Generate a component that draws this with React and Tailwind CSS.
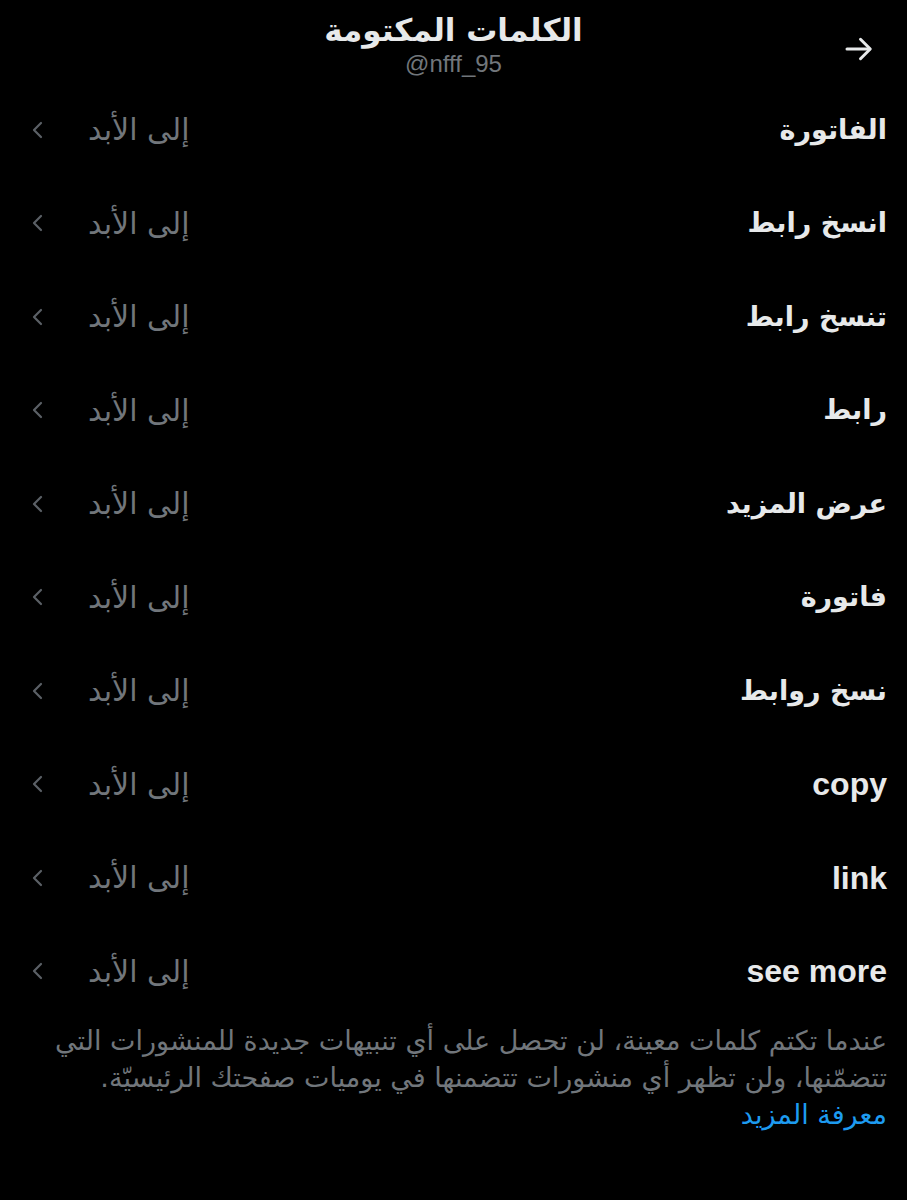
import React from "react";

const words = [
  "الفاتورة",
  "انسخ رابط",
  "تنسخ رابط",
  "رابط",
  "عرض المزيد",
  "فاتورة",
  "نسخ روابط",
  "copy",
  "link",
  "see more",
];

const font = { fontFamily: '"DejaVu Sans", "Noto Sans", sans-serif' };

const App = () => {
  return (
    <div dir="rtl" className="min-h-[1200px] w-full bg-black text-[#e7e9ea]" style={font}>
      {/* Header */}
      <div className="relative h-[83px] flex flex-col items-center pt-[10px]">
        <h1 className="text-[31px] font-bold leading-[40px]">الكلمات المكتومة</h1>
        <div dir="ltr" className="text-[24px] leading-[28px] text-[#71767b]" style={{ fontFamily: '"Liberation Sans", sans-serif' }}>
          @nfff_95
        </div>
        <button className="absolute right-[30px] top-[31px] text-[#e7e9ea]">
          <svg width="36" height="36" viewBox="0 0 24 24" fill="none" stroke="currentColor" strokeWidth="2" strokeLinecap="round" strokeLinejoin="round">
            <path d="M4 12h15" />
            <path d="M13 5.5l6.5 6.5-6.5 6.5" />
          </svg>
        </button>
      </div>

      {/* Muted words */}
      <div>
        {words.map((w, i) => (
          <div key={i} className="h-[93.5px] flex items-center justify-between pr-[20px] pl-[26px]">
            <span
              className={/[a-z]/.test(w) ? "text-[32px] font-bold" : "text-[27px] font-bold"}
              style={/[a-z]/.test(w) ? { fontFamily: '"Liberation Sans", sans-serif' } : undefined}
            >
              {w}
            </span>
            <div className="flex items-center gap-[38px]">
              <span className="text-[30px] text-[#71767b]">إلى الأبد</span>
              <svg width="24" height="24" viewBox="0 0 24 24" fill="none" stroke="#5b6066" strokeWidth="2.2" strokeLinecap="round" strokeLinejoin="round">
                <path d="M15 5l-7 7 7 7" />
              </svg>
            </div>
          </div>
        ))}
      </div>

      {/* Footer */}
      <div className="pr-[20px] pl-[44px] pt-[4px] text-[27px] leading-[37px] text-[#71767b]">
        <p>
          عندما تكتم كلمات معينة، لن تحصل على أي تنبيهات جديدة للمنشورات التي تتضمّنها، ولن تظهر أي منشورات تتضمنها في يوميات صفحتك الرئيسيّة.
        </p>
        <a className="text-[#1d9bf0]">معرفة المزيد</a>
      </div>
    </div>
  );
};

export default App;
